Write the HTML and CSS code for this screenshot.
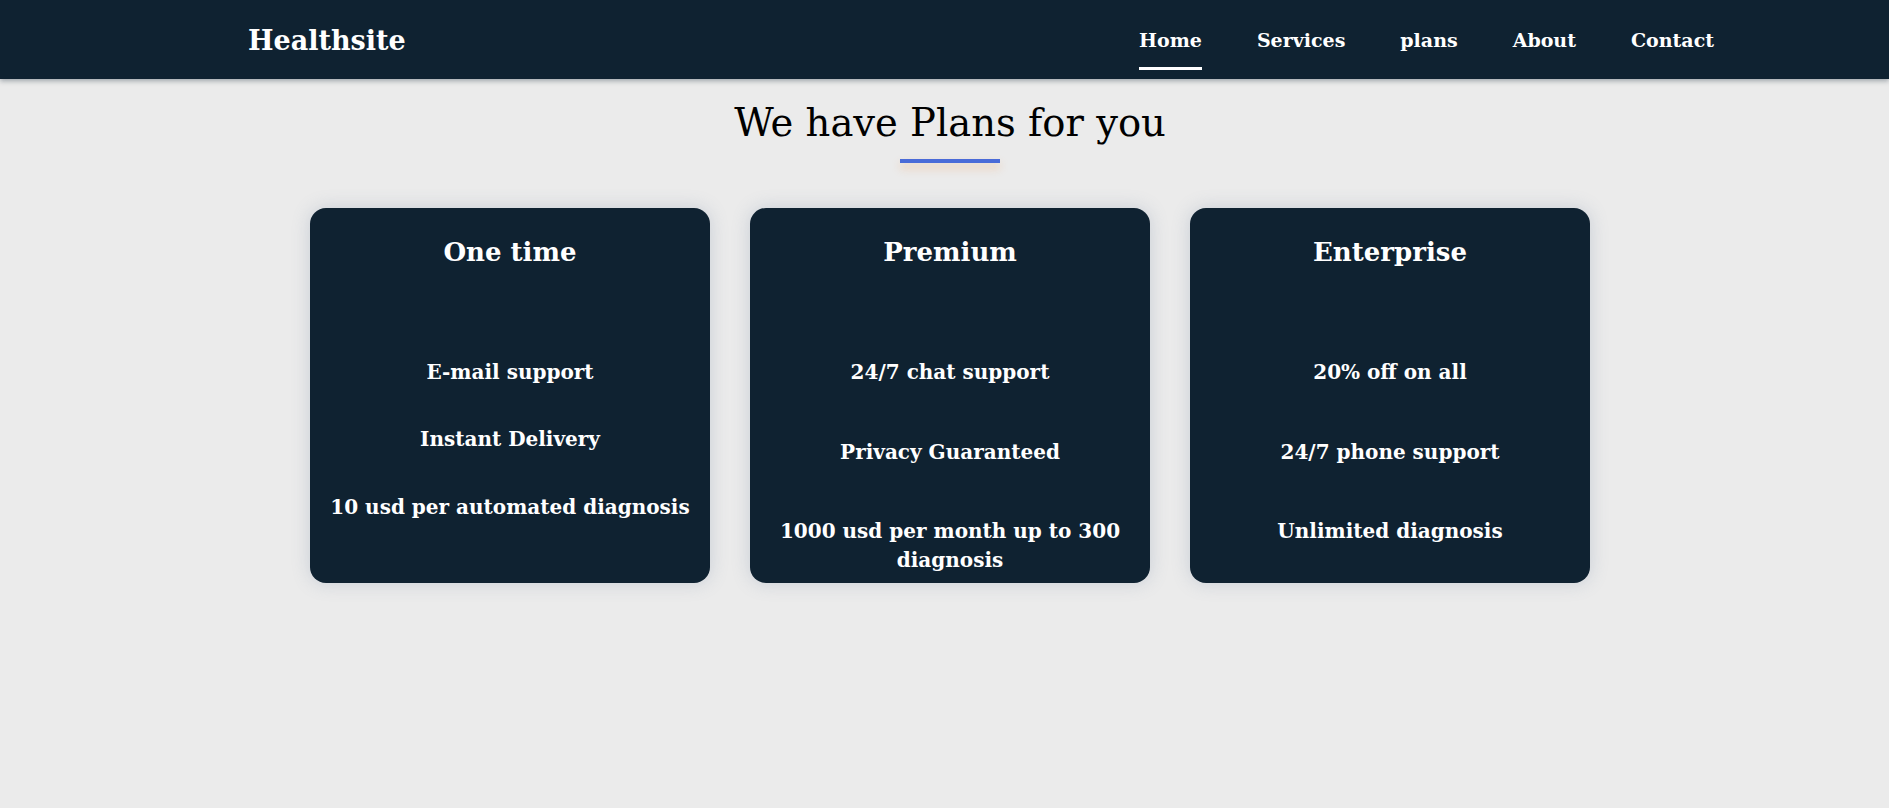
FILE: index.html
```html
<!DOCTYPE html>
<html lang="en">
<head>
<meta charset="utf-8">
<title>Healthsite</title>
<link rel="stylesheet" href="styles.css">
</head>
<body>
<header class="navbar">
  <div class="logo">Healthsite</div>
  <nav class="nav">
    <a class="nav-link active" href="#">Home</a>
    <a class="nav-link" href="#">Services</a>
    <a class="nav-link" href="#">plans</a>
    <a class="nav-link" href="#">About</a>
    <a class="nav-link" href="#">Contact</a>
  </nav>
</header>
<main class="plans">
  <h1 class="plans-title">We have Plans for you</h1>
  <div class="title-bar"></div>
  <div class="cards">
    <section class="card card-compact">
      <h2 class="card-title">One time</h2>
      <ul class="features">
        <li>E-mail support</li>
        <li>Instant Delivery</li>
        <li>10 usd per automated diagnosis</li>
      </ul>
    </section>
    <section class="card">
      <h2 class="card-title">Premium</h2>
      <ul class="features">
        <li>24/7 chat support</li>
        <li>Privacy Guaranteed</li>
        <li>1000 usd per month up to 300 diagnosis</li>
      </ul>
    </section>
    <section class="card">
      <h2 class="card-title">Enterprise</h2>
      <ul class="features">
        <li>20% off on all</li>
        <li>24/7 phone support</li>
        <li>Unlimited diagnosis</li>
      </ul>
    </section>
  </div>
</main>
</body>
</html>
```

FILE: styles.css
```css
* { box-sizing: border-box; }

html, body {
  margin: 0;
  padding: 0;
}

body {
  background: #ebebeb;
  font-family: "DejaVu Serif", "Liberation Serif", serif;
  color: #000;
  min-height: 808px;
}

.navbar {
  height: 79px;
  background: #0f2231;
  display: flex;
  align-items: center;
  justify-content: space-between;
  padding: 0 175px 0 248px;
  box-shadow: 0 2px 5px rgba(15, 34, 49, 0.35);
}

.logo {
  color: #fff;
  font-family: "DejaVu Serif", serif;
  font-weight: bold;
  font-size: 27px;
  padding-top: 2px;
}

.nav {
  display: flex;
  gap: 55px;
  align-self: stretch;
}

.nav-link {
  color: #fff;
  text-decoration: none;
  font-family: "DejaVu Serif", serif;
  font-weight: bold;
  font-size: 19px;
  display: flex;
  align-items: center;
  position: relative;
}

.nav-link.active::after {
  content: "";
  position: absolute;
  left: 0;
  right: 0;
  top: 67px;
  height: 3px;
  background: #fff;
}

.plans {
  display: flex;
  flex-direction: column;
  align-items: center;
  padding-left: 11px;
}

.plans-title {
  margin: 21px 0 0;
  font-size: 38.5px;
  line-height: 46px;
  font-weight: normal;
  color: #000;
}

.title-bar {
  width: 100px;
  height: 4px;
  margin-top: 13px;
  background: #4a6bd8;
  box-shadow: 0 5px 8px rgba(245, 160, 100, 0.45);
}

.cards {
  display: flex;
  gap: 40px;
  margin-top: 45px;
}

.card {
  width: 400px;
  height: 375px;
  background: #0f2231;
  border-radius: 16px;
  color: #fff;
  padding: 28px 10px 0;
  text-align: center;
  box-shadow: 0 0 18px rgba(120, 140, 165, 0.3);
}

.card-title {
  margin: 0;
  font-size: 26px;
  line-height: 32px;
  font-weight: bold;
}

.features {
  list-style: none;
  margin: 90px 0 0;
  padding: 0;
  display: flex;
  flex-direction: column;
  gap: 50.7px;
  font-size: 20px;
  line-height: 29px;
  font-weight: bold;
}

.card-compact .features {
  gap: 38.3px;
}
```
